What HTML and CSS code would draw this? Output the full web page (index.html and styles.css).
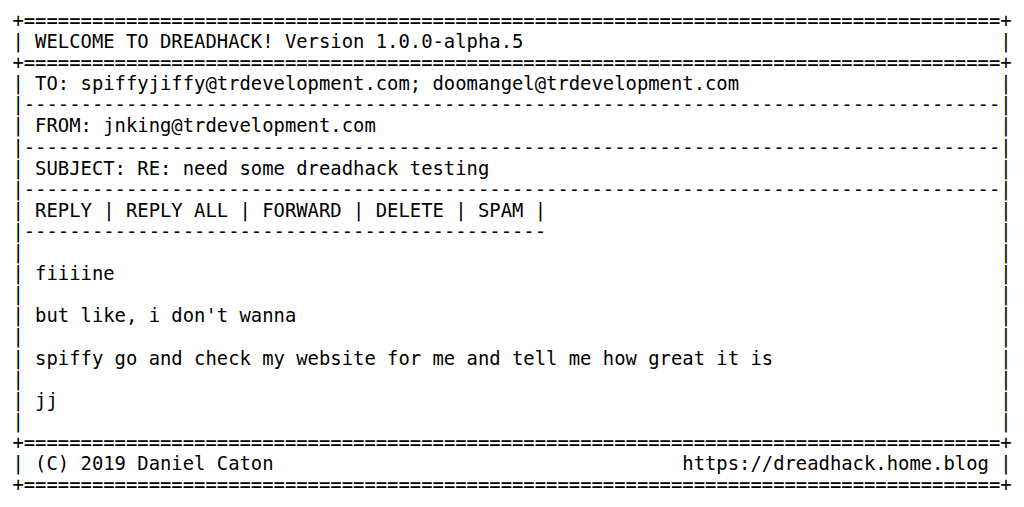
FILE: index.html
```html
<!DOCTYPE html>
<html lang="en">
<head>
<meta charset="utf-8">
<title>DREADHACK</title>
<link rel="stylesheet" href="styles.css">
</head>
<body>
<main class="screen">
  <div class="row"><span>+</span><span class="fill">======================================================================================</span><span>+</span></div>
  <div class="row"><span>| WELCOME TO DREADHACK! Version 1.0.0-alpha.5</span><span>|</span></div>
  <div class="row"><span>+</span><span class="fill">======================================================================================</span><span>+</span></div>
  <div class="row"><span>| TO: spiffyjiffy@trdevelopment.com; doomangel@trdevelopment.com</span><span>|</span></div>
  <div class="row"><span>|</span><span class="fill">--------------------------------------------------------------------------------------</span><span>|</span></div>
  <div class="row"><span>| FROM: jnking@trdevelopment.com</span><span>|</span></div>
  <div class="row"><span>|</span><span class="fill">--------------------------------------------------------------------------------------</span><span>|</span></div>
  <div class="row"><span>| SUBJECT: RE: need some dreadhack testing</span><span>|</span></div>
  <div class="row"><span>|</span><span class="fill">--------------------------------------------------------------------------------------</span><span>|</span></div>
  <div class="row"><span>| REPLY | REPLY ALL | FORWARD | DELETE | SPAM |</span><span>|</span></div>
  <div class="row"><span>|</span><span class="short">----------------------------------------------</span><span class="spacer"></span><span>|</span></div>
  <div class="row"><span>|</span><span>|</span></div>
  <div class="row"><span>| fiiiine</span><span>|</span></div>
  <div class="row"><span>|</span><span>|</span></div>
  <div class="row"><span>| but like, i don't wanna</span><span>|</span></div>
  <div class="row"><span>|</span><span>|</span></div>
  <div class="row"><span>| spiffy go and check my website for me and tell me how great it is</span><span>|</span></div>
  <div class="row"><span>|</span><span>|</span></div>
  <div class="row"><span>| jj</span><span>|</span></div>
  <div class="row"><span>|</span><span>|</span></div>
  <div class="row"><span>+</span><span class="fill">======================================================================================</span><span>+</span></div>
  <div class="row"><span>| (C) 2019 Daniel Caton</span><span>https://dreadhack.home.blog |</span></div>
  <div class="row"><span>+</span><span class="fill">======================================================================================</span><span>+</span></div>
</main>
</body>
</html>
```
FILE: styles.css
```css
html, body {
  background: #ffffff;
}
body {
  margin: 10px 8px 8px;
  color: #000000;
  font-family: "DejaVu Sans Mono", "Liberation Mono", monospace;
  font-size: 18.86px;
  line-height: 21.1px;
}
.screen {
  display: flex;
  flex-direction: column;
  align-items: center;
}
.row {
  display: flex;
  justify-content: space-between;
  width: 88ch;
  white-space: pre;
}
.fill {
  flex: 1 1 auto;
  min-width: 0;
  overflow: hidden;
}
.short {
  flex: 0 0 auto;
}
.spacer {
  flex: 1 1 0;
}
```
